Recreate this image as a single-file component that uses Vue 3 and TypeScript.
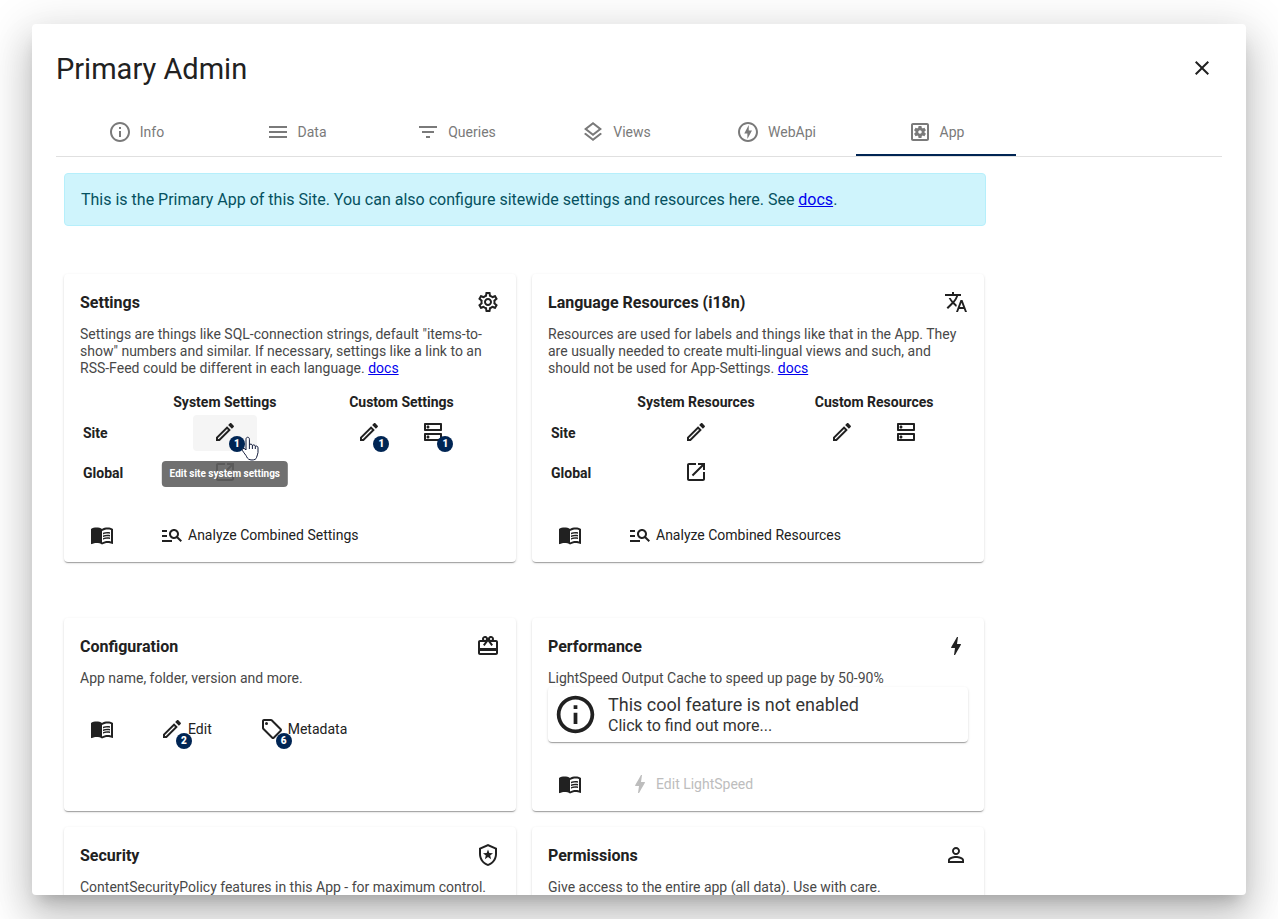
<script setup lang="ts">
import { ref } from 'vue'

interface Tab {
  label: string
  icon: string
}

interface CellAction {
  icon: string
  label: string
  count?: number
  tooltip?: string
}

interface SettingsRow {
  label: string
  system: CellAction[]
  custom: CellAction[]
}

interface CardAction {
  icon: string
  label: string
  count?: number
  disabled?: boolean
}

interface AdminCard {
  title: string
  icon: string
  text: string
  docs?: boolean
  columns?: string[]
  rows?: SettingsRow[]
  feature?: boolean
  actions?: CardAction[]
}

const icons: Record<string, string> = {
  info: 'M11 7h2v2h-2zm0 4h2v6h-2zm1-9C6.48 2 2 6.48 2 12s4.48 10 10 10 10-4.48 10-10S17.52 2 12 2zm0 18c-4.41 0-8-3.59-8-8s3.59-8 8-8 8 3.59 8 8-3.59 8-8 8z',
  menu: 'M3 18h18v-2H3v2zm0-5h18v-2H3v2zm0-7v2h18V6H3z',
  filter: 'M10 18h4v-2h-4v2zM3 6v2h18V6H3zm3 7h12v-2H6v2z',
  layers: 'M11.99 18.54l-7.37-5.73L3 14.07l9 7 9-7-1.63-1.27zM12 16l7.36-5.73L21 9l-9-7-9 7 1.63 1.27L12 16zm0-11.47L17.74 9 12 13.47 6.26 9 12 4.53z',
  offlineBolt: 'M12 2.02c-5.51 0-9.98 4.47-9.98 9.98s4.47 9.98 9.98 9.98 9.98-4.47 9.98-9.98S17.51 2.02 12 2.02zm0 17.96c-4.4 0-7.98-3.58-7.98-7.98S7.6 4.02 12 4.02 19.98 7.6 19.98 12 16.4 19.98 12 19.98zM12.75 5l-4.5 8.5h3.14V19L16 10.5h-3.25z',
  app: 'M19 3H5c-1.11 0-2 .9-2 2v14c0 1.1.89 2 2 2h14c1.11 0 2-.9 2-2V5c0-1.1-.89-2-2-2zm0 16H5V5h14v14zM6.21 13.97l1.2 2.07c.08.13.23.18.37.13l1.49-.6c.31.24.64.44 1.01.59l.22 1.59c.03.14.15.25.3.25h2.4c.15 0 .27-.11.3-.26l.22-1.59c.36-.15.7-.35 1.01-.59l1.49.6c.14.05.29 0 .37-.13l1.2-2.07c.08-.13.04-.29-.07-.39l-1.27-.99c.03-.19.04-.39.04-.58s-.02-.39-.04-.58l1.27-.99c.11-.09.15-.26.07-.39l-1.2-2.07c-.08-.13-.23-.18-.37-.13l-1.49.6c-.31-.24-.64-.44-1.01-.59l-.22-1.59C13.47 6.11 13.35 6 13.2 6h-2.4c-.15 0-.27.11-.3.26l-.22 1.59c-.36.15-.7.34-1.01.58l-1.49-.6c-.14-.05-.29 0-.37.13l-1.2 2.07c-.08.13-.04.29.07.39l1.27.99c-.03.2-.05.39-.05.59s.02.39.04.58l-1.27.99c-.11.1-.14.26-.06.4zM12 10.29c.94 0 1.71.77 1.71 1.71s-.77 1.71-1.71 1.71-1.71-.77-1.71-1.71.77-1.71 1.71-1.71z',
  close: 'M19 6.41L17.59 5 12 10.59 6.41 5 5 6.41 10.59 12 5 17.59 6.41 19 12 13.41 17.59 19 19 17.59 13.41 12z',
  settings: 'M19.43 12.98c.04-.32.07-.64.07-.98 0-.34-.03-.66-.07-.98l2.11-1.65c.19-.15.24-.42.12-.64l-2-3.46c-.09-.16-.26-.25-.44-.25-.06 0-.12.01-.17.03l-2.49 1c-.52-.4-1.08-.73-1.69-.98l-.38-2.65C14.46 2.18 14.25 2 14 2h-4c-.25 0-.46.18-.49.42l-.38 2.65c-.61.25-1.17.59-1.69.98l-2.49-1c-.06-.02-.12-.03-.18-.03-.17 0-.34.09-.43.25l-2 3.46c-.13.22-.07.49.12.64l2.11 1.65c-.04.32-.07.65-.07.98 0 .33.03.66.07.98l-2.11 1.65c-.19.15-.24.42-.12.64l2 3.46c.09.16.26.25.44.25.06 0 .12-.01.17-.03l2.49-1c.52.4 1.08.73 1.69.98l.38 2.65c.03.24.24.42.49.42h4c.25 0 .46-.18.49-.42l.38-2.65c.61-.25 1.17-.59 1.69-.98l2.49 1c.06.02.12.03.18.03.17 0 .34-.09.43-.25l2-3.46c.12-.22.07-.49-.12-.64l-2.11-1.65zm-1.98-1.71c.04.31.05.52.05.73 0 .21-.02.43-.05.73l-.14 1.13.89.7 1.08.84-.7 1.21-1.27-.51-1.04-.42-.9.68c-.43.32-.84.56-1.25.73l-1.06.43-.16 1.13-.2 1.35h-1.4l-.19-1.35-.16-1.13-1.06-.43c-.43-.18-.83-.41-1.23-.71l-.91-.7-1.06.43-1.27.51-.7-1.21 1.08-.84.89-.7-.14-1.13c-.03-.31-.05-.54-.05-.74s.02-.43.05-.73l.14-1.13-.89-.7-1.08-.84.7-1.21 1.27.51 1.04.42.9-.68c.43-.32.84-.56 1.25-.73l1.06-.43.16-1.13.2-1.35h1.39l.19 1.35.16 1.13 1.06.43c.43.18.83.41 1.23.71l.91.7 1.06-.43 1.27-.51.7 1.21-1.07.85-.89.7.14 1.13zM12 8c-2.21 0-4 1.79-4 4s1.79 4 4 4 4-1.79 4-4-1.79-4-4-4zm0 6c-1.1 0-2-.9-2-2s.9-2 2-2 2 .9 2 2-.9 2-2 2z',
  translate: 'M12.87 15.07l-2.54-2.51.03-.03c1.74-1.94 2.98-4.17 3.71-6.53H17V4h-7V2H8v2H1v1.99h11.17C11.5 7.92 10.44 9.75 9 11.35 8.07 10.32 7.3 9.19 6.69 8h-2c.73 1.63 1.73 3.17 2.98 4.56l-5.09 5.02L4 19l5-5 3.11 3.11.76-2.04zM18.5 10h-2L12 22h2l1.12-3h4.75L21 22h2l-4.5-12zm-2.62 7l1.62-4.33L19.12 17h-3.24z',
  edit: 'M14.06 9.02l.92.92L5.92 19H5v-.92l9.06-9.06M17.66 3c-.25 0-.51.1-.7.29l-1.83 1.83 3.75 3.75 1.83-1.83c.39-.39.39-1.02 0-1.41l-2.34-2.34c-.2-.2-.45-.29-.71-.29zm-3.6 3.19L3 17.25V21h3.75L17.81 9.94l-3.75-3.75z',
  dns: 'M19 15v4H5v-4h14m1-2H4c-.55 0-1 .45-1 1v6c0 .55.45 1 1 1h16c.55 0 1-.45 1-1v-6c0-.55-.45-1-1-1zM7 18.5c-.82 0-1.5-.67-1.5-1.5s.68-1.5 1.5-1.5 1.5.67 1.5 1.5-.67 1.5-1.5 1.5zM19 5v4H5V5h14m1-2H4c-.55 0-1 .45-1 1v6c0 .55.45 1 1 1h16c.55 0 1-.45 1-1V4c0-.55-.45-1-1-1zM7 8.5c-.82 0-1.5-.67-1.5-1.5S6.18 5.5 7 5.5s1.5.68 1.5 1.5S7.83 8.5 7 8.5z',
  open: 'M19 19H5V5h7V3H5c-1.11 0-2 .9-2 2v14c0 1.1.89 2 2 2h14c1.1 0 2-.9 2-2v-7h-2v7zM14 3v2h3.59l-9.83 9.83 1.41 1.41L19 6.41V10h2V3h-7z',
  book: 'M21 5c-1.11-.35-2.33-.5-3.5-.5-1.95 0-4.05.4-5.5 1.5-1.45-1.1-3.55-1.5-5.5-1.5S2.45 4.9 1 6v14.65c0 .25.25.5.5.5.1 0 .15-.05.25-.05C3.1 20.45 5.05 20 6.5 20c1.95 0 4.05.4 5.5 1.5 1.35-.85 3.8-1.5 5.5-1.5 1.65 0 3.35.3 4.75 1.05.1.05.15.05.25.05.25 0 .5-.25.5-.5V6c-.6-.45-1.25-.75-2-1zm0 13.5c-1.1-.35-2.3-.5-3.5-.5-1.7 0-4.15.65-5.5 1.5V8c1.35-.85 3.8-1.5 5.5-1.5 1.2 0 2.4.15 3.5.5v11.5zM17.5 10.5c.88 0 1.73.09 2.5.26V9.24c-.79-.15-1.64-.24-2.5-.24-1.7 0-3.24.29-4.5.83v1.66c1.13-.64 2.7-.99 4.5-.99zM13 12.49v1.66c1.13-.64 2.7-.99 4.5-.99.88 0 1.73.09 2.5.26V11.9c-.79-.15-1.64-.24-2.5-.24-1.7 0-3.24.3-4.5.83zM17.5 14.33c-1.7 0-3.24.29-4.5.83v1.66c1.13-.64 2.7-.99 4.5-.99.88 0 1.73.09 2.5.26v-1.52c-.79-.16-1.64-.24-2.5-.24z',
  analyze: 'M7 9H2V7h5v2zm0 3H2v2h5v-2zm13.59 7l-3.83-3.83c-.8.52-1.74.83-2.76.83-2.76 0-5-2.24-5-5s2.24-5 5-5 5 2.24 5 5c0 1.02-.31 1.96-.83 2.75L22 17.59 20.59 19zM17 11c0-1.65-1.35-3-3-3s-3 1.35-3 3 1.35 3 3 3 3-1.35 3-3zM2 19h10v-2H2v2z',
  gift: 'M20 6h-2.18c.11-.31.18-.65.18-1 0-1.66-1.34-3-3-3-1.05 0-1.96.54-2.5 1.35l-.5.67-.5-.68C10.96 2.54 10.05 2 9 2 7.34 2 6 3.34 6 5c0 .35.07.69.18 1H4c-1.11 0-1.99.89-1.99 2L2 19c0 1.11.89 2 2 2h16c1.11 0 2-.89 2-2V8c0-1.11-.89-2-2-2zm-5-2c.55 0 1 .45 1 1s-.45 1-1 1-1-.45-1-1 .45-1 1-1zM9 4c.55 0 1 .45 1 1s-.45 1-1 1-1-.45-1-1 .45-1 1-1zm11 15H4v-2h16v2zm0-5H4V8h5.08L7 10.83 8.62 12 11 8.76l1-1.36 1 1.36L15.38 12 17 10.83 14.92 8H20v6z',
  bolt: 'M11 21h-1l1-7H7.5c-.58 0-.57-.32-.38-.66.19-.34.05-.08.07-.12C8.48 10.94 10.42 7.54 13 3h1l-1 7h3.5c.49 0 .56.33.47.51l-.07.15C12.96 17.55 11 21 11 21z',
  tag: 'M21.41 11.58l-9-9C12.05 2.22 11.55 2 11 2H4c-1.1 0-2 .9-2 2v7c0 .55.22 1.05.59 1.42l9 9c.36.36.86.58 1.41.58s1.05-.22 1.41-.59l7-7c.37-.36.59-.86.59-1.41s-.23-1.06-.59-1.42zM13 20.01L4 11V4h7v-.01l9 9-7 7.02zM6.5 5a1.5 1.5 0 1 0 0 3 1.5 1.5 0 1 0 0-3z',
  shield: 'M12 1L3 5v6c0 5.55 3.84 10.74 9 12 5.16-1.26 9-6.45 9-12V5l-9-4zm7 10c0 4.52-2.98 8.69-7 9.93-4.02-1.24-7-5.41-7-9.93V6.3l7-3.11 7 3.11V11zM8.9 16.2L12 14.12l3.1 2.08-.92-3.6L17 10.24l-3.7-.26L12 6.5l-1.3 3.48-3.7.26 2.82 2.36z',
  person: 'M12 5.9c1.16 0 2.1.94 2.1 2.1s-.94 2.1-2.1 2.1S9.9 9.16 9.9 8s.94-2.1 2.1-2.1m0 9c2.97 0 6.1 1.46 6.1 2.1v1.1H5.9V17c0-.64 3.13-2.1 6.1-2.1M12 4C9.79 4 8 5.79 8 8s1.79 4 4 4 4-1.79 4-4-1.79-4-4-4zm0 9c-2.67 0-8 1.34-8 4v3h16v-3c0-2.66-5.33-4-8-4z',
}

const tabs: Tab[] = [
  { label: 'Info', icon: 'info' },
  { label: 'Data', icon: 'menu' },
  { label: 'Queries', icon: 'filter' },
  { label: 'Views', icon: 'layers' },
  { label: 'WebApi', icon: 'offlineBolt' },
  { label: 'App', icon: 'app' },
]
const activeTab = ref('App')

const sections: AdminCard[][] = [
  [
    {
      title: 'Settings',
      icon: 'settings',
      text: 'Settings are things like SQL-connection strings, default "items-to-show" numbers and similar. If necessary, settings like a link to an RSS-Feed could be different in each language.',
      docs: true,
      columns: ['System Settings', 'Custom Settings'],
      rows: [
        {
          label: 'Site',
          system: [{ icon: 'edit', label: 'Edit site system settings', count: 1, tooltip: 'Edit site system settings' }],
          custom: [
            { icon: 'edit', label: 'Edit site custom settings', count: 1 },
            { icon: 'dns', label: 'Configure site custom settings', count: 1 },
          ],
        },
        { label: 'Global', system: [{ icon: 'open', label: 'Open global system settings' }], custom: [] },
      ],
      actions: [{ icon: 'analyze', label: 'Analyze Combined Settings' }],
    },
    {
      title: 'Language Resources (i18n)',
      icon: 'translate',
      text: 'Resources are used for labels and things like that in the App. They are usually needed to create multi-lingual views and such, and should not be used for App-Settings.',
      docs: true,
      columns: ['System Resources', 'Custom Resources'],
      rows: [
        {
          label: 'Site',
          system: [{ icon: 'edit', label: 'Edit site system resources' }],
          custom: [
            { icon: 'edit', label: 'Edit site custom resources' },
            { icon: 'dns', label: 'Configure site custom resources' },
          ],
        },
        { label: 'Global', system: [{ icon: 'open', label: 'Open global system resources' }], custom: [] },
      ],
      actions: [{ icon: 'analyze', label: 'Analyze Combined Resources' }],
    },
  ],
  [
    {
      title: 'Configuration',
      icon: 'gift',
      text: 'App name, folder, version and more.',
      actions: [
        { icon: 'edit', label: 'Edit', count: 2 },
        { icon: 'tag', label: 'Metadata', count: 6 },
      ],
    },
    {
      title: 'Performance',
      icon: 'bolt',
      text: 'LightSpeed Output Cache to speed up page by 50-90%',
      feature: true,
      actions: [{ icon: 'bolt', label: 'Edit LightSpeed', disabled: true }],
    },
    {
      title: 'Security',
      icon: 'shield',
      text: 'ContentSecurityPolicy features in this App - for maximum control.',
    },
    {
      title: 'Permissions',
      icon: 'person',
      text: 'Give access to the entire app (all data). Use with care.',
    },
  ],
]
</script>

<template>
  <div class="page">
    <section class="dialog" role="dialog" aria-labelledby="dialog-title">
      <header class="dialog-header">
        <h1 id="dialog-title">Primary Admin</h1>
        <button class="close" type="button" aria-label="Close">
          <svg class="icon" viewBox="0 0 24 24"><path :d="icons.close" /></svg>
        </button>
      </header>

      <nav class="tabs" role="tablist">
        <button
          v-for="tab in tabs"
          :key="tab.label"
          class="tab"
          :class="{ active: tab.label === activeTab }"
          type="button"
          role="tab"
          :aria-selected="tab.label === activeTab"
          @click="activeTab = tab.label"
        >
          <svg class="icon" viewBox="0 0 24 24"><path :d="icons[tab.icon]" /></svg>
          <span>{{ tab.label }}</span>
        </button>
      </nav>

      <main class="content">
        <p class="alert">
          This is the Primary App of this Site. You can also configure sitewide settings and resources here. See
          <a href="#docs">docs</a>.
        </p>

        <div v-for="(cards, index) in sections" :key="index" class="card-grid">
          <article v-for="card in cards" :key="card.title" class="card">
            <header class="card-header">
              <h2>{{ card.title }}</h2>
              <svg class="icon" viewBox="0 0 24 24"><path :d="icons[card.icon]" /></svg>
            </header>
            <p class="card-text">
              {{ card.text }}
              <a v-if="card.docs" href="#docs">docs</a>
            </p>

            <table v-if="card.rows" class="matrix">
              <thead>
                <tr>
                  <td></td>
                  <th v-for="column in card.columns" :key="column" scope="col">{{ column }}</th>
                </tr>
              </thead>
              <tbody>
                <tr v-for="row in card.rows" :key="row.label">
                  <th scope="row">{{ row.label }}</th>
                  <td v-for="(cell, cellIndex) in [row.system, row.custom]" :key="cellIndex">
                    <div class="cell">
                      <button
                        v-for="action in cell"
                        :key="action.label"
                        class="cell-button"
                        :class="{ hovered: action.tooltip }"
                        type="button"
                        :aria-label="action.label"
                      >
                        <span class="icon-box">
                          <svg class="icon" viewBox="0 0 24 24"><path :d="icons[action.icon]" /></svg>
                          <span v-if="action.count" class="badge">{{ action.count }}</span>
                        </span>
                        <span v-if="action.tooltip" class="tooltip" role="tooltip">{{ action.tooltip }}</span>
                        <svg v-if="action.tooltip" class="pointer" viewBox="0 0 18 25">
                          <path
                            d="M5 14V3.2C5 .6 8.4.6 8.4 3.2V9c.5-1.4 2.8-1.2 3 .6.8-1.2 2.7-.8 2.9.8 1-.9 2.700-.2 2.700 1.400v4.700c0 1.800-1.200 3-1.400 4.800-.3 1.800-2 2.700-4.600 2.700-3 0-4.600-1.400-5.300-3.200-.6-1.600-3-4-4.200-6.200-.9-1.800 1.300-2.900 2.500-1.600z"
                          />
                          <path d="M8.400 9v4M11.400 9.600V13M14.300 10.400V13" />
                        </svg>
                      </button>
                    </div>
                  </td>
                </tr>
              </tbody>
            </table>

            <a v-if="card.feature" class="feature" href="#feature">
              <svg class="feature-icon" viewBox="0 0 24 24"><path :d="icons.info" /></svg>
              <span class="feature-text">
                <strong>This cool feature is not enabled</strong>
                <span>Click to find out more...</span>
              </span>
            </a>

            <footer v-if="card.actions" class="actions">
              <button class="book" type="button" :aria-label="card.title + ' documentation'">
                <svg class="icon" viewBox="0 0 24 24"><path :d="icons.book" /></svg>
              </button>
              <button
                v-for="action in card.actions"
                :key="action.label"
                class="action"
                type="button"
                :disabled="action.disabled"
              >
                <span class="icon-box">
                  <svg class="icon" viewBox="0 0 24 24"><path :d="icons[action.icon]" /></svg>
                  <span v-if="action.count" class="badge">{{ action.count }}</span>
                </span>
                <span>{{ action.label }}</span>
              </button>
            </footer>
          </article>
        </div>
      </main>
    </section>
  </div>
</template>

<style>
body {
  margin: 0;
  background: #fff;
}
</style>

<style scoped>
* {
  box-sizing: border-box;
}

.page {
  height: 100vh;
  padding: 24px 32px;
  overflow: hidden;
  font-family: Roboto, "Liberation Sans", sans-serif;
  color: #212121;
}

.dialog {
  display: flex;
  flex-direction: column;
  height: 100%;
  padding: 24px 24px 0;
  overflow: hidden;
  border-radius: 4px;
  background: #fff;
  box-shadow:
    0 11px 15px -7px rgba(0, 0, 0, 0.2),
    0 24px 38px 3px rgba(0, 0, 0, 0.14),
    0 9px 46px 8px rgba(0, 0, 0, 0.12);
}

button {
  padding: 0;
  border: 0;
  background: none;
  font: inherit;
  color: inherit;
  cursor: pointer;
}

a {
  color: #00e;
}

.icon {
  display: block;
  flex: none;
  width: 24px;
  height: 24px;
  fill: currentColor;
}

.dialog-header {
  display: flex;
  flex: none;
  align-items: center;
  justify-content: space-between;
  height: 40px;
  margin-bottom: 20px;
}

h1 {
  margin: 0;
  padding-top: 2px;
  font-size: 29px;
  font-weight: 400;
  line-height: 38px;
}

.close {
  display: grid;
  width: 40px;
  height: 40px;
  place-items: center;
}

.tabs {
  display: flex;
  flex: none;
  border-bottom: 1px solid #e0e0e0;
}

.tab {
  display: flex;
  flex: 0 1 160px;
  align-items: center;
  justify-content: center;
  gap: 8px;
  height: 48px;
  border-top: 2px solid transparent;
  border-bottom: 2px solid transparent;
  color: #7a7a7a;
  font-size: 14px;
  font-weight: 400;
}

.tab.active {
  border-bottom-color: #002554;
}

.content {
  flex: 1;
  min-height: 0;
  padding: 16px 8px;
  overflow: auto;
  scrollbar-width: none;
}

.alert {
  max-width: 922px;
  margin: 0 0 48px;
  padding: 16px;
  border: 1px solid #b6effb;
  border-radius: 4px;
  background: #cff4fc;
  color: #055160;
  font-size: 16px;
  line-height: 19px;
}

.card-grid {
  display: grid;
  grid-template-columns: repeat(2, minmax(0, 1fr));
  gap: 16px;
  max-width: 920px;
  margin-bottom: 56px;
}

.card {
  display: flex;
  flex-direction: column;
  padding: 16px 16px 9px;
  border-radius: 4px;
  box-shadow:
    0 2px 1px -1px rgba(0, 0, 0, 0.2),
    0 1px 1px 0 rgba(0, 0, 0, 0.14),
    0 1px 3px 0 rgba(0, 0, 0, 0.12);
}

.card-header {
  display: flex;
  align-items: center;
  justify-content: space-between;
  margin-bottom: 12px;
}

h2 {
  margin: 0;
  padding-top: 2px;
  font-size: 16px;
  font-weight: 700;
  line-height: 22px;
}

.card-text {
  margin: 0;
  color: #484848;
  font-size: 14px;
  font-weight: 400;
  line-height: 17px;
}

.matrix {
  width: 100%;
  margin-top: 14px;
  border-spacing: 2px;
  font-size: 14px;
  line-height: 17px;
}

.matrix th,
.matrix td {
  padding: 1px;
}

.matrix th {
  font-weight: 700;
}

.matrix tbody th {
  text-align: left;
}

.cell {
  display: flex;
  justify-content: center;
}

.cell-button {
  position: relative;
  display: flex;
  align-items: flex-start;
  justify-content: center;
  width: 64px;
  height: 36px;
  padding-top: 5px;
  border-radius: 4px;
}

.cell-button.hovered {
  background: #f5f5f5;
}

.icon-box {
  position: relative;
}

.badge {
  position: absolute;
  right: -8px;
  bottom: -8px;
  width: 16px;
  height: 16px;
  border-radius: 8px;
  background: #002554;
  color: #fff;
  font-size: 10px;
  font-weight: 900;
  line-height: 16px;
  text-align: center;
}

.tooltip {
  position: absolute;
  z-index: 1;
  top: 46px;
  left: 50%;
  padding: 6px 8px;
  border-radius: 4px;
  background: rgba(97, 97, 97, 0.9);
  color: #fff;
  font-size: 10px;
  font-weight: 700;
  line-height: 14px;
  white-space: nowrap;
  transform: translateX(-50%);
}

.pointer {
  position: absolute;
  z-index: 2;
  top: 21px;
  left: 48px;
  width: 18px;
  height: 25px;
  fill: #fff;
  stroke: #111a3a;
  stroke-width: 1;
}

.feature {
  display: flex;
  align-items: center;
  gap: 10px;
  height: 55px;
  padding: 0 5px;
  border-radius: 4px;
  box-shadow:
    0 2px 1px -1px rgba(0, 0, 0, 0.2),
    0 1px 1px 0 rgba(0, 0, 0, 0.14),
    0 1px 3px 0 rgba(0, 0, 0, 0.12);
  color: inherit;
  text-decoration: none;
}

.feature-icon {
  width: 45px;
  height: 45px;
  fill: currentColor;
}

.feature-text {
  display: flex;
  flex-direction: column;
  color: #333;
  font-size: 16px;
  line-height: 19px;
}

.feature-text strong {
  font-size: 18px;
  font-weight: 400;
  line-height: 22px;
}

.actions {
  display: flex;
  gap: 16px;
  margin-top: 24px;
}

.matrix + .actions {
  margin-top: 23px;
}

.book {
  display: grid;
  width: 44px;
  height: 36px;
  margin-right: 4px;
  place-items: center;
}

.action {
  display: flex;
  align-items: center;
  gap: 4px;
  height: 36px;
  padding: 0 16px;
  font-size: 14px;
  font-weight: 400;
}

.action:disabled {
  color: #bdbdbd;
  cursor: default;
}
</style>
